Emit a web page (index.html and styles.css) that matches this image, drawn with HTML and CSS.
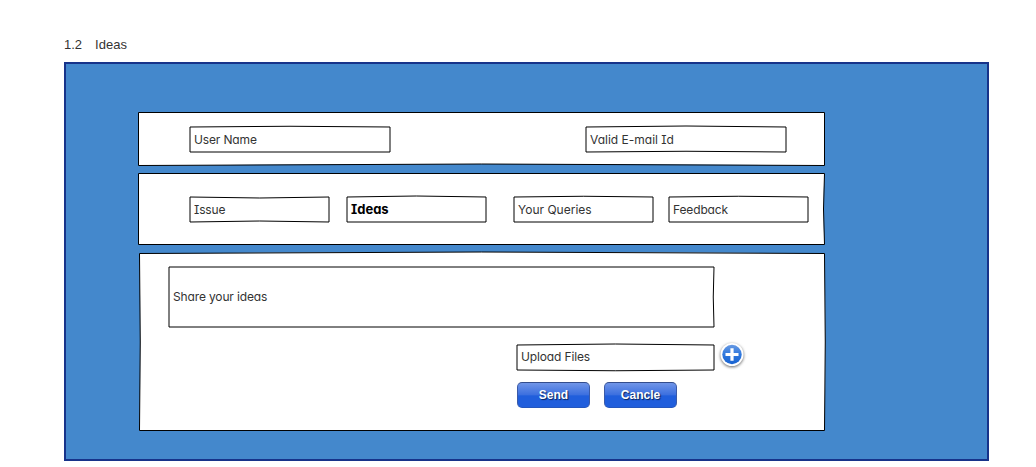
FILE: index.html
```html
<!DOCTYPE html>
<html lang="en">
<head>
<meta charset="utf-8">
<title>Ideas</title>
<link rel="stylesheet" href="styles.css">
</head>
<body>
<h1 class="heading"><span>1.2</span><span>Ideas</span></h1>
<main class="board">
  <section class="panel user-panel">
    <svg class="sketch" viewBox="138 112 687 54"><path class="paper" d="M138.500 112.500H824.500V165.500Q481 162.500 138.500 165.500Z"/></svg>
    <div class="field wide"><svg class="sketch" viewBox="190 127 200 25"><path d="M190 127Q290 125.500 390 127V152H190Z"/></svg><span class="label tight">User Name</span></div>
    <div class="field wide"><svg class="sketch" viewBox="586 127 200 25"><path d="M586 127Q686 125 786 127V152Q686 150.500 586 152Z"/></svg><span class="label">Valid E-mail Id</span></div>
  </section>
  <nav class="panel tabs-panel">
    <svg class="sketch" viewBox="138 173 687 72"><path class="paper" d="M138.500 173.500H824.500Q822.500 209 824.500 244.500H138.500Z"/></svg>
    <div class="field tab"><svg class="sketch" viewBox="190 197 139 25"><path d="M190 197Q260 199 329 197V222Q260 220 190 222Z"/></svg><span class="label tight">Issue</span></div>
    <div class="field tab active"><svg class="sketch" viewBox="347 197 139 25"><path d="M347 197Q416 195 486 197V222H347Z"/></svg><span class="label">Ideas</span></div>
    <div class="field tab"><svg class="sketch" viewBox="514 197 139 25"><path d="M514 197Q584 195.500 653 197V222H514Z"/></svg><span class="label">Your Queries</span></div>
    <div class="field tab"><svg class="sketch" viewBox="669 197 139 25"><path d="M669 197Q739 195.500 808 197V222H669Z"/></svg><span class="label tight">Feedback</span></div>
  </nav>
  <section class="panel form-panel">
    <svg class="sketch" viewBox="138 253 687 178"><path class="paper" d="M139.500 253.500Q481 250.500 824.500 253.500Q826 342 824.500 430.500H139.500Q141 342 139.500 253.500Z"/></svg>
    <div class="field message"><svg class="sketch" viewBox="169 267 545 60"><path d="M169 267H714Q712.500 297 714 327H169Z"/></svg><span class="label tight">Share your ideas</span></div>
    <div class="upload-row">
      <div class="field upload"><svg class="sketch" viewBox="517 345 197 25"><path d="M517 345Q615 343 714 345V370Q615 371.500 517 370Z"/></svg><span class="label tight">Upload Files</span></div>
      <svg class="plus" viewBox="0 0 28 28" width="28" height="28">
        <defs><linearGradient id="plusFill" x1="0" y1="0" x2="0" y2="1"><stop offset="0" stop-color="#6799e3"/><stop offset=".5" stop-color="#3078dd"/><stop offset="1" stop-color="#1762d1"/></linearGradient></defs>
        <circle class="plus-ring" cx="14" cy="13.500" r="11.500"/>
        <circle cx="14" cy="13.500" r="9.700" fill="url(#plusFill)"/>
        <path class="plus-sign" d="M14 7.200V19.800M7.500 13.500H20.500"/>
      </svg>
    </div>
    <div class="actions"><button class="button">Send</button><button class="button">Cancle</button></div>
  </section>
</main>
</body>
</html>
```
FILE: styles.css
```css
* { box-sizing: border-box; }
body {
  margin: 0;
  padding: 36px 47px 6px 64px;
  height: 467px;
  overflow: hidden;
  background: #fff;
  font-family: "Liberation Sans", Arial, sans-serif;
}
.heading {
  display: flex;
  gap: 13px;
  margin: 0;
  height: 26px;
  font-size: 13px;
  line-height: 17px;
  font-weight: 400;
  color: #333;
}
.board {
  display: flex;
  flex-direction: column;
  gap: 8px;
  height: 399px;
  padding: 48px 0 0 72px;
  border: 2px solid #17338a;
  background: #4488cc;
}
.panel { position: relative; width: 687px; }
.user-panel {
  display: flex;
  justify-content: space-between;
  height: 53px;
  padding: 15px 39px 0 52px;
}
.tabs-panel {
  display: flex;
  height: 72px;
  padding: 24px 0 0 52px;
}
.form-panel { height: 178px; padding: 14px 0 0 31px; }
.sketch {
  position: absolute;
  top: 0;
  left: 0;
  width: 100%;
  height: 100%;
  overflow: visible;
  fill: none;
  stroke: #000;
  stroke-width: 1;
}
.user-panel > .sketch { height: 54px; }
.paper { fill: #fff; }
.field {
  position: relative;
  display: flex;
  align-items: center;
  flex: none;
  height: 25px;
  padding-left: 4px;
}
.wide { width: 200px; }
.tab { width: 139px; margin-right: 16px; }
.tab:nth-of-type(1) { margin-right: 18px; }
.tab.active { margin-right: 28px; }
.label {
  position: relative;
  font-family: "Comic Sans MS", Inter, sans-serif;
  font-feature-settings: "cv08", "cv11";
  font-size: 12px;
  line-height: 16px;
  color: #333;
  white-space: nowrap;
}
.tight { letter-spacing: -0.14px; }
.active .label { font-size: 13px; font-weight: 700; color: #000; padding-bottom: 1px; }
.message { width: 545px; height: 60px; }
.upload-row { display: flex; margin: 18px 0 0 348px; height: 25px; }
.upload { width: 197px; padding-bottom: 2px; }
.plus {
  position: relative;
  flex: none;
  margin: -4px 0 0 4px;
  overflow: visible;
  filter: drop-shadow(0 1px 1.5px rgba(0, 0, 0, .6));
}
.plus-ring { fill: #fff; }
.plus-sign { fill: none; stroke: #fff; stroke-width: 3.2; }
.actions {
  position: relative;
  display: flex;
  gap: 14px;
  margin: 12px 0 0 348px;
}
.button {
  width: 73px;
  height: 26px;
  padding: 0 0 1px;
  border: 1px solid #3a5aa8;
  border-top-color: #334d8d;
  border-bottom-color: #2456bd;
  border-radius: 5px;
  background: linear-gradient(#7095e8 0%, #3d70df 48%, #205edc 54%, #205edc 100%);
  color: #fff;
  font: 700 12px/16px "Liberation Sans", Arial, sans-serif;
  text-shadow: 1px 1px 1px #0b2458;
}
```
